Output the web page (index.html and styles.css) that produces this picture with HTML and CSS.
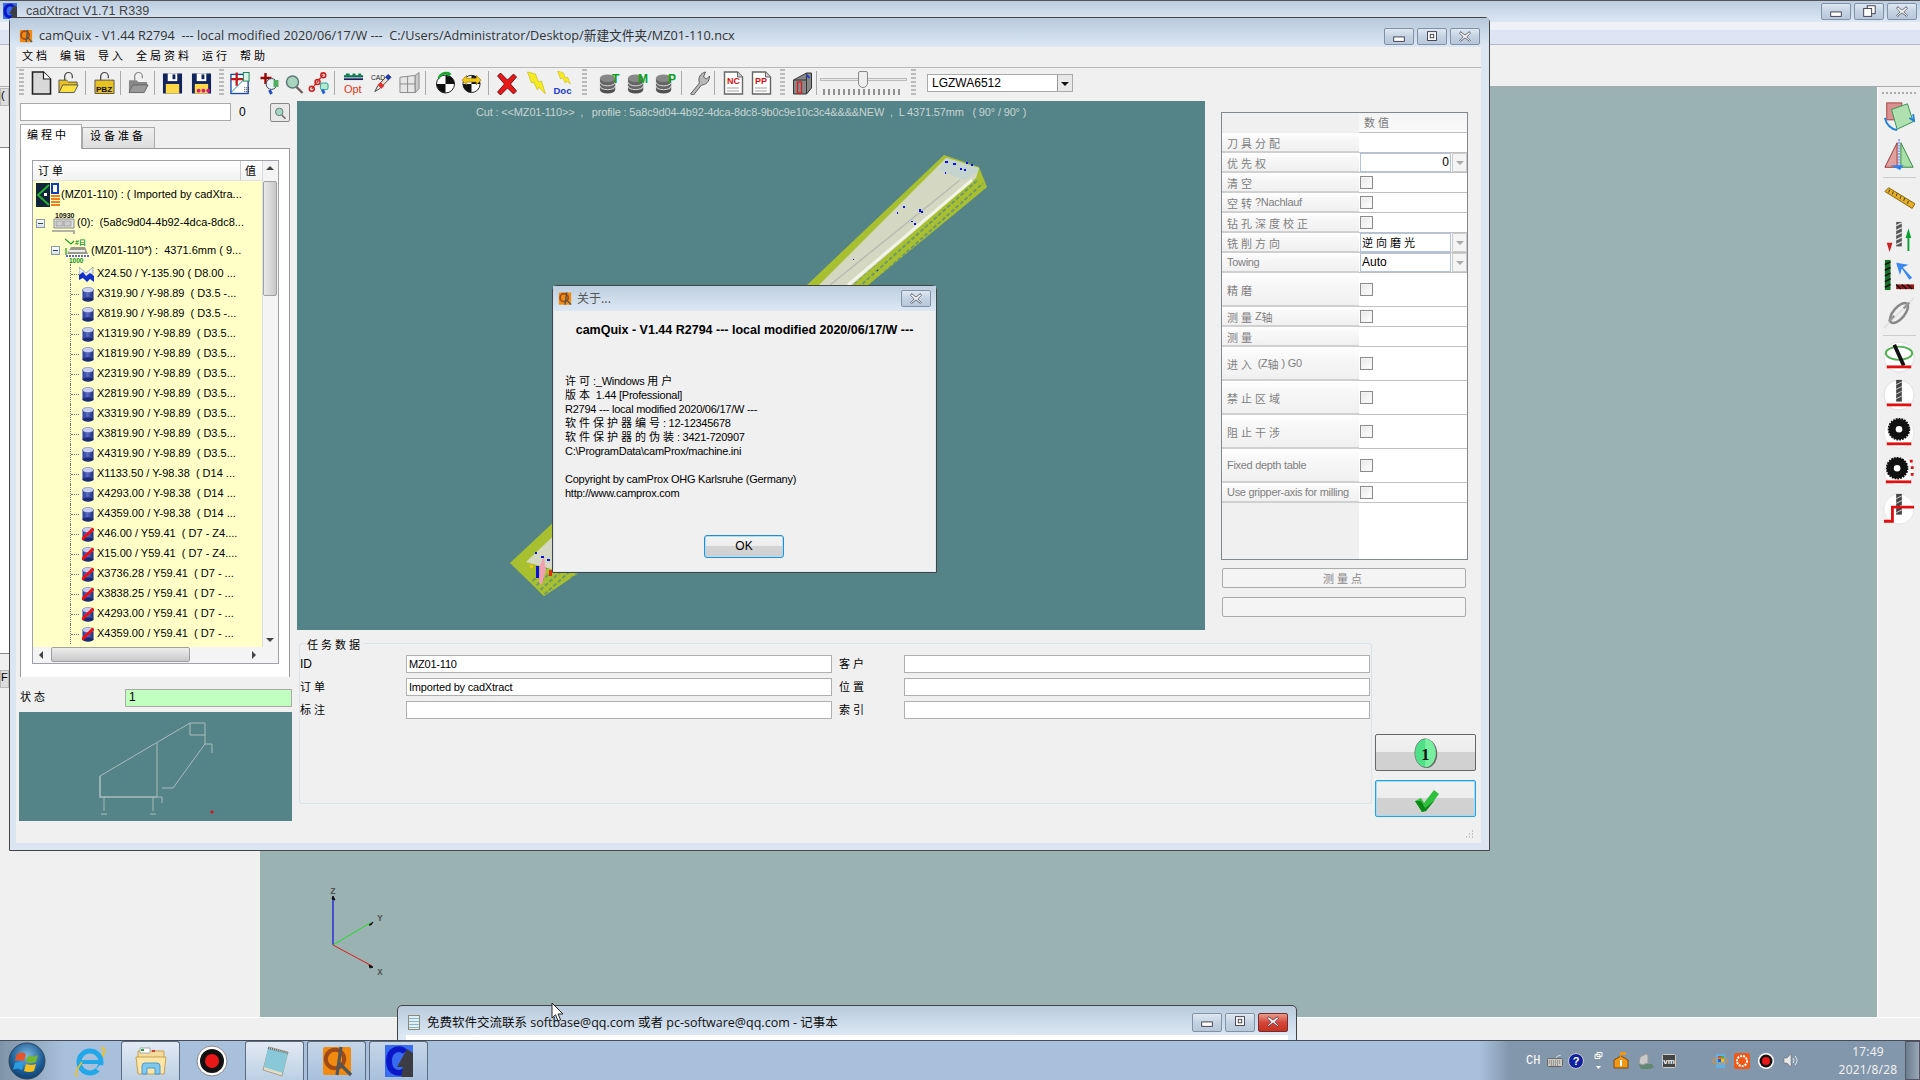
FILE: index.html
```html
<!DOCTYPE html>
<html lang="zh">
<head>
<meta charset="utf-8">
<title>camQuix</title>
<link rel="stylesheet" href="styles.css">
</head>
<body>
<svg class="defs" width="0" height="0">
  <defs>
    <linearGradient id="cyl" x1="0" x2="1" y1="0" y2="0"><stop offset="0" stop-color="#28389a"/><stop offset=".45" stop-color="#5a6cc8"/><stop offset="1" stop-color="#1c2a78"/></linearGradient>
    <symbol id="i-qlogo" viewBox="0 0 16 16"><rect x="1" y="1" width="14" height="14" rx="1" fill="#f08a10"/><circle cx="7" cy="7" r="4.6" fill="none" stroke="#a04a18" stroke-width="2"/><path d="M9 9l6 6M10 1l-2 14" stroke="#555" stroke-width="1.6"/></symbol>
    <symbol id="i-clogo" viewBox="0 0 16 16"><rect x="1" y="0" width="14" height="16" fill="#3a6cf0"/><path d="M11 3.5C9 1 3 1.5 3 8s6 7 8 4.5" fill="none" stroke="#0a18c8" stroke-width="3"/><path d="M12 2l-5 9 3 0-1 5h6V4z" fill="#3c3c44"/></symbol>
    <symbol id="i-cyl" viewBox="0 0 12 15"><rect x=".5" y="2.5" width="11" height="10.5" fill="url(#cyl)"/><ellipse cx="6" cy="12.5" rx="5.5" ry="2.2" fill="#1c2a78"/><ellipse cx="6" cy="3" rx="5.5" ry="2.6" fill="#c8d0f0" stroke="#5060b0" stroke-width=".5"/></symbol>
    <symbol id="i-cylx" viewBox="0 0 12 15"><use href="#i-cyl" width="12" height="15"/><path d="M0 12.5L11.5 1.5" stroke="#f01010" stroke-width="3"/></symbol>
    <symbol id="i-mill" viewBox="0 0 15 15"><path d="M0 0l7 6 7-6v7l-7 6-7-6z" fill="#e8ecf4" stroke="#667" stroke-width=".5"/><path d="M0 8l4-3 3 4 4-3 4 3v6l-4-3-3 3-4-4-4 2z" fill="#1030c8"/></symbol>
    <symbol id="i-order" viewBox="0 0 24 24"><rect x="0" y="0" width="14" height="24" fill="#12243a"/><path d="M13 2L2 12l11 10" fill="none" stroke="#28b030" stroke-width="2"/><rect x="8" y="10" width="3" height="3" fill="#fff"/><rect x="15" y="0" width="8" height="11" fill="#1040c0"/><rect x="17" y="2" width="4" height="7" fill="#fff"/><path d="M15 13h9M15 16h9M15 19h9M15 22h9" stroke="#f08020" stroke-width="2"/></symbol>
    <symbol id="i-sheet" viewBox="0 0 24 24"><path d="M3 8h20v9H3z" fill="#e4e4e4" stroke="#8a8a8a"/><rect x="5" y="10" width="7" height="5" fill="#ccc" stroke="#888" stroke-width=".6"/><rect x="13" y="10" width="7" height="5" fill="#ccc" stroke="#888" stroke-width=".6"/><path d="M1 20h22v3" fill="none" stroke="#999" stroke-width="1.6"/><text x="4" y="7" class="svg-t" font-size="7" font-weight="700" fill="#111">10930</text></symbol>
    <symbol id="i-part" viewBox="0 0 24 26"><path d="M2 16l4-7h14l3 7z" fill="#9a9a8a"/><path d="M4 13h16" stroke="#eee" stroke-width="2"/><path d="M1 18h23" stroke="#3030e0" stroke-dasharray="2 1" stroke-width="1.4"/><path d="M1 10V17M0 1l6 5 3-3" fill="none" stroke="#18a018" stroke-width="1.2"/><text x="10" y="7" class="svg-t" font-size="7" font-weight="700" fill="#089018">#日</text><text x="4" y="25" class="svg-t" font-size="6.500" font-weight="700" fill="#089018">1000</text></symbol>
    <symbol id="t-new" viewBox="0 0 20 24"><path d="M1 1h11l7 7v15H1z" fill="#d8d8d8" stroke="#222" stroke-width="1.6"/><path d="M12 1v7h7" fill="#fff" stroke="#222" stroke-width="1.2"/></symbol>
    <symbol id="t-open" viewBox="0 0 22 24"><path d="M7 9V5a4 4 0 0 1 8 0v2" fill="none" stroke="#444" stroke-width="1.3"/><path d="M1 22V9h8l2 2h9v4H5z" fill="#e8c020" stroke="#555"/><path d="M1 22l4-8h16l-4 8z" fill="#fde040" stroke="#555"/></symbol>
    <symbol id="t-pbz" viewBox="0 0 22 24"><path d="M7 9V5a4 4 0 0 1 8 0v2" fill="none" stroke="#444" stroke-width="1.3"/><path d="M1 23V9h20v14z" fill="#e8c020" stroke="#555"/><text x="2" y="21" class="svg-t" font-size="8.500" font-weight="700" fill="#111">PBZ</text></symbol>
    <symbol id="t-ogray" viewBox="0 0 22 24"><path d="M7 9V5a4 4 0 0 1 8 0v2" fill="none" stroke="#888" stroke-width="1.3"/><path d="M1 22V9h8l2 2h9v4H5z" fill="#888"/><path d="M1 22l4-8h16l-4 8z" fill="#999" stroke="#666"/></symbol>
    <symbol id="t-save" viewBox="0 0 22 24"><path d="M1 2h20v21H1z" fill="#12245c"/><rect x="6" y="2" width="10" height="8" fill="#fff"/><rect x="11" y="3" width="3" height="5" fill="#12245c"/><rect x="4" y="13" width="14" height="10" fill="#ffd848"/></symbol>
    <symbol id="t-save2" viewBox="0 0 22 24"><path d="M1 2h20v21H1z" fill="#12245c"/><rect x="6" y="2" width="10" height="8" fill="#fff"/><rect x="11" y="3" width="3" height="5" fill="#12245c"/><rect x="4" y="13" width="14" height="10" fill="#ffd848"/><circle cx="8" cy="20" r="2" fill="#d81880"/><circle cx="13" cy="20" r="2" fill="#d81880"/><circle cx="18" cy="20" r="2" fill="#d81880"/></symbol>
    <symbol id="t-tool" viewBox="0 0 22 24"><rect x="1" y="3" width="18" height="20" fill="#fff" stroke="#1848a8" stroke-width="1.4"/><path d="M1 22L15 8" stroke="#2080c0" stroke-width="1"/><path d="M7 1v14M1 8h13" stroke="#c01818" stroke-width="2.4"/><rect x="14" y="1" width="6" height="9" fill="#d8f0e8" stroke="#168050"/><path d="M15 17h5M15 19h5M15 21h5" stroke="#222" stroke-dasharray="1 1"/></symbol>
    <symbol id="t-plus" viewBox="0 0 20 24"><path d="M5 2v11M0 7h11" stroke="#980808" stroke-width="2.4"/><circle cx="11" cy="13" r="5.4" fill="#e8f4f4" stroke="#445"/><path d="M9 19l2 4" stroke="#2050c8" stroke-width="3"/><rect x="13" y="9" width="5" height="7" fill="#50b060"/></symbol>
    <symbol id="t-mag" viewBox="0 0 18 24"><circle cx="7" cy="11" r="6" fill="#a8d4c0" stroke="#607878" stroke-width="1.5"/><path d="M11 16l6 6" stroke="#706060" stroke-width="2.4"/></symbol>
    <symbol id="t-nodes" viewBox="0 0 22 24"><path d="M4 18L16 3" stroke="#d02020" stroke-width="1.4" stroke-dasharray="3 1"/><circle cx="4" cy="18" r="2.6" fill="none" stroke="#d02020" stroke-width="1.6"/><circle cx="10" cy="11" r="2.6" fill="none" stroke="#d02020" stroke-width="1.6"/><circle cx="16" cy="4" r="2.6" fill="none" stroke="#d02020" stroke-width="1.6"/><rect x="13" y="12" width="8" height="7" rx="2" fill="#b8e8d0" stroke="#18a090"/><path d="M15 19l2 4" stroke="#2060d0" stroke-width="3"/></symbol>
    <symbol id="t-opt" viewBox="0 0 22 24"><path d="M1 5h20" stroke="#107060" stroke-width="2.4"/><path d="M3 2h4v3H3zM10 2h3v3h-3zM16 2h3v3h-3z" fill="#108050"/><path d="M1 8h20" stroke="#1a1a60" stroke-width="1.8"/><text x="1" y="22" class="svg-t" font-size="11.500" fill="#e03818">Opt</text></symbol>
    <symbol id="t-cad" viewBox="0 0 22 24"><text x="0" y="9" class="svg-t" font-size="7" fill="#222">CAD</text><path d="M4 21l3-6L18 3l3 3L9 18z" fill="#e8e0d0" stroke="#444"/><path d="M15 6l3 3 3-3-3-3z" fill="#1838b8"/><path d="M7 14l4 4 3-3-4-4z" fill="#e03030"/></symbol>
    <symbol id="t-grid" viewBox="0 0 22 24"><path d="M1 6l16-2v18H1z" fill="#e6e6e6" stroke="#888"/><path d="M17 4l4-3v17l-4 4z" fill="#ccc" stroke="#888"/><path d="M9 5v17M1 13h16" stroke="#888"/></symbol>
    <symbol id="t-target" viewBox="0 0 20 24"><circle cx="10" cy="13" r="9" fill="#fff" stroke="#222"/><path d="M10 4a9 9 0 0 1 9 9H10zM10 13v9a9 9 0 0 1-9-9z" fill="#111"/><path d="M2 7a9 9 0 0 1 11-6l-1-1 4 3-4 3V4a6 6 0 0 0-8 4z" fill="#18a830"/></symbol>
    <symbol id="t-target2" viewBox="0 0 22 24"><circle cx="11" cy="13" r="9" fill="#fff" stroke="#222"/><path d="M11 4a9 9 0 0 1 9 9h-9zM11 13v9a9 9 0 0 1-9-9z" fill="#111"/><path d="M1 9l5-5v3h10V4l5 5-5 5v-3H6v3z" fill="#f0c818" stroke="#806000" stroke-width=".6"/></symbol>
    <symbol id="t-x" viewBox="0 0 20 24"><path d="M3 2l7 7 6-6 3 3-6 7 6 7-3 3-6-6-7 7-3-3 7-8L0 5z" fill="#e81818" stroke="#500" stroke-width=".8"/></symbol>
    <symbol id="t-bolt" viewBox="0 0 20 24"><path d="M1 1l8 2 3 8 3-1 4 13-7-7-1 3-4-8-2 1z" fill="#f4ec20" stroke="#c0b010" stroke-width=".6"/></symbol>
    <symbol id="t-doc" viewBox="0 0 20 24"><path d="M4 0l6 2 2 5 2-1 3 7-4-3-1 2-3-5-2 1z" fill="#f4ec20" stroke="#c0b010" stroke-width=".5"/><text x="0" y="23" class="svg-t" font-size="9.500" font-weight="700" fill="#1838d8">Doc</text></symbol>
    <symbol id="t-db" viewBox="0 0 22 24"><ellipse cx="9" cy="19" rx="8" ry="4" fill="#505050"/><rect x="1" y="7" width="16" height="12" fill="#666"/><path d="M1 11a8 4 0 0 0 16 0M1 15a8 4 0 0 0 16 0" fill="none" stroke="#ddd"/><ellipse cx="9" cy="7" rx="8" ry="4" fill="#888"/></symbol>
    <symbol id="t-wrench" viewBox="0 0 20 24"><path d="M1 23l9-11c-2-5 1-10 6-11l-2 5 3 2 3-3c0 6-4 9-8 9l-8 10z" fill="#b8b8b8" stroke="#555" stroke-width=".9"/></symbol>
    <symbol id="t-page" viewBox="0 0 20 24"><path d="M1 1h13l5 5v17H1z" fill="#fff" stroke="#666" stroke-width="1.4"/><path d="M14 1v5h5" fill="#ccc" stroke="#666"/><path d="M4 17h12M4 20h12" stroke="#444" stroke-dasharray="1 1" stroke-width="1.2"/></symbol>
    <symbol id="t-box" viewBox="0 0 20 24"><path d="M1 9l13-7h5v15l-5 6H1z" fill="#888" stroke="#333"/><path d="M14 2v21M1 9h13" stroke="#333"/><rect x="5" y="11" width="4" height="11" fill="none" stroke="#e01818" stroke-width="1.2"/><path d="M14 4l3 3" stroke="#2840d0" stroke-width="2"/></symbol>
    <symbol id="tick-x" viewBox="0 0 86 6"><path d="M4 0v6M9 0v6M14 0v6M19 0v6M24 0v6M29 0v6M34 0v6M39 0v6M44 0v6M49 0v6M54 0v6M59 0v6M64 0v6M69 0v6M74 0v6M79 0v6" stroke="#333"/></symbol>
    <symbol id="r-rot" viewBox="0 0 34 34"><rect x="4" y="2" width="16" height="18" fill="#dc9090" stroke="#a04040"/><path d="M9 9l17-6 6 19-17 8z" fill="#b0e0b0" stroke="#309050"/><path d="M2 18a16 16 0 0 0 13 13M32 14l1 7-5-3" fill="none" stroke="#2080e0" stroke-width="2"/></symbol>
    <symbol id="r-mirror" viewBox="0 0 34 34"><path d="M15 4L2 30h13z" fill="#e0a0a0" stroke="#903030"/><path d="M19 4l13 26H19z" fill="#a8e0a8" stroke="#308040"/><path d="M17 0v30" stroke="#2060e0" stroke-dasharray="2 1"/><path d="M8 28h14l-4 5z" fill="#3080f0"/></symbol>
    <symbol id="r-ruler" viewBox="0 0 34 34"><path d="M2 9l4-4 28 17-3 5z" fill="#e8b020" stroke="#806010"/><path d="M7 7l-1 3M11 9l-1 3M15 11l-1 3M19 14l-1 3M23 16l-1 3M27 19l-1 3" stroke="#333"/></symbol>
    <symbol id="r-updown" viewBox="0 0 34 34"><rect x="14" y="1" width="6" height="26" fill="#555"/><path d="M14 5l6-3M14 10l6-3M14 15l6-3M14 20l6-3M14 25l6-3" stroke="#ddd" stroke-width="1.5"/><path d="M7 9v14h-3l3 10 3-10H7z" fill="#c82020"/><path d="M27 8L24 18h2v14h2V18h2z" fill="#08a030"/></symbol>
    <symbol id="r-tool" viewBox="0 0 34 34"><rect x="2" y="1" width="6" height="32" fill="#187028"/><path d="M2 6l6-3M2 12l6-3M2 18l6-3M2 24l6-3M2 30l6-3" stroke="#111" stroke-width="1.6"/><path d="M14 27h19v5H14z" fill="#901818"/><path d="M14 27l5 5M20 27l5 5M26 27l5 5" stroke="#111" stroke-width="1.4"/><path d="M28 22L20 10l-2 7-4-13 13 2-6 3 10 11z" fill="#3888f0"/></symbol>
    <symbol id="r-chain" viewBox="0 0 34 34"><path d="M1 33L33 1" stroke="#ddd" stroke-width="1.5"/><ellipse cx="17" cy="17" rx="6" ry="13" transform="rotate(40 17 17)" fill="none" stroke="#888" stroke-width="2.6"/><path d="M6 26l6-6M22 12l6-6" stroke="#999" stroke-width="2.6"/></symbol>
    <symbol id="r-orbit" viewBox="0 0 34 34"><circle cx="17" cy="17" r="16" fill="#fff" stroke="#ddd"/><ellipse cx="17" cy="13" rx="14" ry="7" fill="none" stroke="#50b050" stroke-width="2"/><path d="M12 4l10 22" stroke="#111" stroke-width="4"/><rect x="4" y="26" width="26" height="3" fill="#e01010"/></symbol>
    <symbol id="r-drill" viewBox="0 0 34 34"><circle cx="17" cy="17" r="16" fill="#fff" stroke="#ddd"/><rect x="14" y="1" width="6" height="23" fill="#444"/><path d="M14 6l6-3M14 11l6-3M14 16l6-3M14 21l6-3" stroke="#ddd"/><rect x="4" y="26" width="26" height="3" fill="#e01010"/></symbol>
    <symbol id="r-saw" viewBox="0 0 34 34"><circle cx="17" cy="17" r="16" fill="#fff" stroke="#e4e4e4"/><circle cx="17" cy="13" r="11" fill="#111" stroke="#111" stroke-width="2" stroke-dasharray="2 1"/><circle cx="17" cy="13" r="3.5" fill="#fff"/><rect x="4" y="27" width="26" height="3" fill="#e01010"/></symbol>
    <symbol id="r-saw2" viewBox="0 0 34 34"><circle cx="17" cy="17" r="16" fill="#fff" stroke="#e4e4e4"/><circle cx="15" cy="14" r="11" fill="#111" stroke="#111" stroke-width="2" stroke-dasharray="2 1"/><circle cx="15" cy="14" r="3.5" fill="#fff"/><rect x="3" y="27" width="27" height="3" fill="#e01010"/><path d="M30 5v3M31 12v3M31 19v3" stroke="#e01010" stroke-width="3"/></symbol>
    <symbol id="r-step" viewBox="0 0 34 34"><circle cx="17" cy="17" r="16" fill="#fff" stroke="#e4e4e4"/><rect x="14" y="1" width="6" height="22" fill="#444"/><path d="M14 6l6-3M14 11l6-3M14 16l6-3M14 21l6-3" stroke="#ddd"/><path d="M1 30h9V15h23" fill="none" stroke="#e01010" stroke-width="3"/></symbol>
    <symbol id="w-min" viewBox="0 0 30 17"><rect x="9" y="9" width="12" height="5" fill="#fff" stroke="#334"/></symbol>
    <symbol id="w-max" viewBox="0 0 30 17"><rect x="10" y="3" width="10" height="10" fill="#fff" stroke="#334"/><rect x="13" y="6" width="4" height="4" fill="none" stroke="#334"/></symbol>
    <symbol id="w-restore" viewBox="0 0 30 17"><rect x="13" y="2" width="9" height="9" fill="#fff" stroke="#334"/><rect x="9" y="5" width="9" height="9" fill="#fff" stroke="#334"/></symbol>
    <symbol id="w-close" viewBox="0 0 30 17"><path d="M10 3l5 4 5-4 1 2-4 4 4 4-1 1-5-4-5 4-1-1 4-4-4-4z" fill="#fff" stroke="#334" stroke-width=".8"/></symbol>
  </defs>
</svg>

<div class="desk">
  <div class="bgwin">
    <div class="bg-title"><svg class="bg-logo"><use href="#i-clogo"/></svg><span>cadXtract V1.71 R339</span>
      <div class="bg-ctrl"><span class="wbtn"><svg><use href="#w-min"/></svg></span><span class="wbtn"><svg><use href="#w-restore"/></svg></span><span class="wbtn"><svg><use href="#w-close"/></svg></span></div>
    </div>
    <div class="bg-band1"></div>
    <div class="bg-band2"></div>
    <div class="bg-tools"></div>
    <div class="bg-main">
      <div class="bg-left">
        <div class="bl-tab">(</div>
        <div class="bl-panel"></div>
        <div class="bl-btn">F</div>
      </div>
      <div class="bg-canvas">
        <svg class="axes" viewBox="300 860 100 120" width="100" height="120">
          <path d="M333 945V898" stroke="#1010e0" stroke-width="1.2" fill="none"/>
          <path d="M333 945L370 923" stroke="#20e020" stroke-width="1" fill="none"/>
          <path d="M333 945L372 966" stroke="#e01818" stroke-width="1" fill="none"/>
          <path d="M332 899l1-3 2 4zM369 925l4-3-2 3zM369 965l4 2-3 1z" fill="#111" stroke="#111"/>
          <text x="333" y="894" class="axis-t">Z</text>
          <text x="380" y="921" class="axis-t">Y</text>
          <text x="380" y="975" class="axis-t">X</text>
        </svg>
      </div>
      <div class="bg-right">
        <div class="r-grip"></div>
        <svg class="r-i r-first"><use href="#r-rot"/></svg>
        <svg class="r-i"><use href="#r-mirror"/></svg>
        <div class="r-sep"></div>
        <svg class="r-i"><use href="#r-ruler"/></svg>
        <svg class="r-i"><use href="#r-updown"/></svg>
        <svg class="r-i"><use href="#r-tool"/></svg>
        <svg class="r-i"><use href="#r-chain"/></svg>
        <div class="r-sep"></div>
        <svg class="r-i"><use href="#r-orbit"/></svg>
        <svg class="r-i"><use href="#r-drill"/></svg>
        <svg class="r-i"><use href="#r-saw"/></svg>
        <svg class="r-i"><use href="#r-saw2"/></svg>
        <svg class="r-i"><use href="#r-step"/></svg>
      </div>
    </div>
    <div class="bg-foot"></div>
  </div>

  <div class="notepad">
    <div class="np-title"><span class="np-ic"></span><span class="np-text">免费软件交流联系 softbase@qq.com 或者 pc-software@qq.com - 记事本</span>
      <div class="np-ctrl"><span class="wbtn"><svg><use href="#w-min"/></svg></span><span class="wbtn"><svg><use href="#w-max"/></svg></span><span class="wbtn wbtn-red"><svg><use href="#w-close"/></svg></span></div>
    </div>
    <div class="np-body"></div>
  </div>

  <div class="camq">
    <div class="cq-title"><svg class="cq-logo"><use href="#i-qlogo"/></svg><span class="cq-text">camQuix - V1.44 R2794  --- local modified 2020/06/17/W ---  C:/Users/Administrator/Desktop/新建文件夹/MZ01-110.ncx</span>
      <div class="cq-ctrl"><span class="wbtn"><svg><use href="#w-min"/></svg></span><span class="wbtn"><svg><use href="#w-max"/></svg></span><span class="wbtn"><svg><use href="#w-close"/></svg></span></div>
    </div>
    <div class="cq-client">
      <div class="menu"><span>文档</span><span>编辑</span><span>导入</span><span>全局资料</span><span>运行</span><span>帮助</span></div>
      <div class="tools">
        <i class="grip ml3"></i>
        <svg class="ti ml7"><use href="#t-new"/></svg>
        <svg class="ti ml6"><use href="#t-open"/></svg>
        <i class="sep ml6"></i>
        <svg class="ti ml8"><use href="#t-pbz"/></svg>
        <i class="sep ml5"></i>
        <svg class="ti ml7"><use href="#t-ogray"/></svg>
        <i class="sep ml5"></i>
        <svg class="ti ml7"><use href="#t-save"/></svg>
        <svg class="ti ml8"><use href="#t-save2"/></svg>
        <i class="grip ml7"></i>
        <svg class="ti ml6"><use href="#t-tool"/></svg>
        <svg class="ti ml9"><use href="#t-plus"/></svg>
        <svg class="ti ml3"><use href="#t-mag"/></svg>
        <svg class="ti ml3"><use href="#t-nodes"/></svg>
        <i class="sep ml5"></i>
        <svg class="ti ml8"><use href="#t-opt"/></svg>
        <svg class="ti ml7"><use href="#t-cad"/></svg>
        <svg class="ti ml7"><use href="#t-grid"/></svg>
        <i class="sep ml5"></i>
        <svg class="ti ml9"><use href="#t-target"/></svg>
        <svg class="ti ml5"><use href="#t-target2"/></svg>
        <i class="sep ml6"></i>
        <svg class="ti ml8"><use href="#t-x"/></svg>
        <svg class="ti ml8"><use href="#t-bolt"/></svg>
        <svg class="ti ml6"><use href="#t-doc"/></svg>
        <i class="grip ml8"></i>
        <svg class="ti ml12 db"><use href="#t-db"/><text x="13" y="12" class="svg-t db-t">T</text></svg>
        <svg class="ti ml7 db"><use href="#t-db"/><text x="11" y="12" class="svg-t db-t">M</text></svg>
        <svg class="ti ml7 db"><use href="#t-db"/><text x="13" y="12" class="svg-t db-t">P</text></svg>
        <i class="sep ml5"></i>
        <svg class="ti ml7"><use href="#t-wrench"/></svg>
        <i class="sep ml4"></i>
        <svg class="ti ml8 pg"><use href="#t-page"/><text x="4" y="13" class="svg-t pg-t">NC</text></svg>
        <svg class="ti ml7 pg"><use href="#t-page"/><text x="4" y="13" class="svg-t pg-t">PP</text></svg>
        <i class="grip ml8"></i>
        <svg class="ti ml7"><use href="#t-box"/></svg>
        <i class="sep ml3"></i>
        <div class="slider"><div class="sl-track"></div><svg class="sl-ticks"><use href="#tick-x"/></svg><div class="sl-thumb"></div></div>
        <i class="grip ml4"></i>
        <div class="combo-top"><span>LGZWA6512</span><b class="combo-btn"></b></div>
      </div>
      <div class="work">
        <div class="left">
          <div class="search"><div class="search-in"></div><span class="search-n">0</span><div class="search-btn"><svg viewBox="0 0 18 24" width="15" height="15"><use href="#t-mag"/></svg></div></div>
          <div class="tabs"><div class="tab tab-on">编程中</div><div class="tab">设备准备</div></div>
          <div class="tabpanel">
            <div class="treebox">
              <div class="tree">
                <div class="tree-head"><span class="th1">订单</span><span class="th2">值</span></div>
                <div class="row r28"><svg class="ic-order"><use href="#i-order"/></svg><span>(MZ01-110) : ( Imported by cadXtra...</span></div>
                <div class="row r28 lv1"><i class="minus"></i><svg class="ic-sheet"><use href="#i-sheet"/></svg><span>(0):  (5a8c9d04-4b92-4dca-8dc8...</span></div>
                <div class="row r27 lv2"><i class="minus"></i><svg class="ic-part"><use href="#i-part"/></svg><span>(MZ01-110*) :  4371.6mm ( 9...</span></div>
                <div class="leaf"><svg class="ic-cyl ic-mill"><use href="#i-mill"/></svg><span>X24.50 / Y-135.90 ( D8.00 ...</span></div>
                <div class="leaf"><svg class="ic-cyl"><use href="#i-cyl"/></svg><span>X319.90 / Y-98.89  ( D3.5 -...</span></div>
                <div class="leaf"><svg class="ic-cyl"><use href="#i-cyl"/></svg><span>X819.90 / Y-98.89  ( D3.5 -...</span></div>
                <div class="leaf"><svg class="ic-cyl"><use href="#i-cyl"/></svg><span>X1319.90 / Y-98.89  ( D3.5...</span></div>
                <div class="leaf"><svg class="ic-cyl"><use href="#i-cyl"/></svg><span>X1819.90 / Y-98.89  ( D3.5...</span></div>
                <div class="leaf"><svg class="ic-cyl"><use href="#i-cyl"/></svg><span>X2319.90 / Y-98.89  ( D3.5...</span></div>
                <div class="leaf"><svg class="ic-cyl"><use href="#i-cyl"/></svg><span>X2819.90 / Y-98.89  ( D3.5...</span></div>
                <div class="leaf"><svg class="ic-cyl"><use href="#i-cyl"/></svg><span>X3319.90 / Y-98.89  ( D3.5...</span></div>
                <div class="leaf"><svg class="ic-cyl"><use href="#i-cyl"/></svg><span>X3819.90 / Y-98.89  ( D3.5...</span></div>
                <div class="leaf"><svg class="ic-cyl"><use href="#i-cyl"/></svg><span>X4319.90 / Y-98.89  ( D3.5...</span></div>
                <div class="leaf"><svg class="ic-cyl"><use href="#i-cyl"/></svg><span>X1133.50 / Y-98.38  ( D14 ...</span></div>
                <div class="leaf"><svg class="ic-cyl"><use href="#i-cyl"/></svg><span>X4293.00 / Y-98.38  ( D14 ...</span></div>
                <div class="leaf"><svg class="ic-cyl"><use href="#i-cyl"/></svg><span>X4359.00 / Y-98.38  ( D14 ...</span></div>
                <div class="leaf"><svg class="ic-cyl"><use href="#i-cylx"/></svg><span>X46.00 / Y59.41  ( D7 - Z4....</span></div>
                <div class="leaf"><svg class="ic-cyl"><use href="#i-cylx"/></svg><span>X15.00 / Y59.41  ( D7 - Z4....</span></div>
                <div class="leaf"><svg class="ic-cyl"><use href="#i-cylx"/></svg><span>X3736.28 / Y59.41  ( D7 - ...</span></div>
                <div class="leaf"><svg class="ic-cyl"><use href="#i-cylx"/></svg><span>X3838.25 / Y59.41  ( D7 - ...</span></div>
                <div class="leaf"><svg class="ic-cyl"><use href="#i-cylx"/></svg><span>X4293.00 / Y59.41  ( D7 - ...</span></div>
                <div class="leaf leaf-last"><svg class="ic-cyl"><use href="#i-cylx"/></svg><span>X4359.00 / Y59.41  ( D7 - ...</span></div>
              </div>
              <div class="vscroll"><b class="arr-up"></b><div class="vthumb"></div><b class="arr-down"></b></div>
              <div class="hscroll"><b class="arr-left"></b><div class="hthumb"></div><b class="arr-right"></b></div>
              <div class="corner"></div>
            </div>
          </div>
          <div class="status"><span class="cjk">状态</span><div class="status-in">1</div></div>
          <div class="mini">
            <svg viewBox="0 0 273 109" width="273" height="109">
              <g fill="none" stroke="#a8bcbc">
                <path d="M81 64L171 11h15v21h7v9M171 11v12h15M138 31v54M143 85v6M143 85h-5M143 76h11l32-44M85 85v14M134 85v14" stroke-width="1"/>
                <path d="M81 64v21h57" stroke-width="1.6"/>
                <path d="M82 102h6M131 102h6" stroke-width="1"/>
              </g>
              <circle cx="193" cy="100" r="1.6" fill="#e01010"/>
            </svg>
          </div>
        </div>
        <div class="right">
          <div class="top">
            <div class="view">
              <div class="view-cap">Cut : &lt;&lt;MZ01-110&gt;&gt;  ,   profile : 5a8c9d04-4b92-4dca-8dc8-9b0c9e10c3c4&amp;&amp;&amp;&amp;NEW  ,  L 4371.57mm   ( 90° / 90° )</div>
              <svg class="beam" viewBox="297 101 908 529" width="908" height="529">
                <defs>
                  <pattern id="hatch" width="6" height="6" patternUnits="userSpaceOnUse" patternTransform="rotate(-42)"><rect width="6" height="6" fill="#a8c030"/><rect x="1" y="1" width="4" height="2" fill="#6f9a68"/></pattern>
                  <linearGradient id="body" x1="0" y1="0" x2="1" y2="1"><stop offset="0" stop-color="#ccd0c0"/><stop offset="1" stop-color="#dde0c4"/></linearGradient>
                </defs>
                <polygon points="944,155 979,167 987,187 868,285 577,574 544,596 510,563 807,285" fill="#a8c030"/>
                <polygon points="976,177 987,187 868,285 577,574 544,596 530,582 835,290" fill="url(#hatch)"/>
                <polygon points="946,158 979,168 976,178 852,285 555,570 526,562 820,284" fill="url(#body)"/>
                <polygon points="977,172 979,168 947,158 938,170 965,180" fill="#c6d4d0"/>
                <path d="M972 180L848 285" stroke="#f2f4e6" stroke-width="3" fill="none"/>
                <path d="M960 180L830 285" stroke="#b8bcb0" stroke-width="1.5" fill="none"/>
                <g fill="#0a10e0">
                  <rect x="945" y="161" width="3" height="2"/><rect x="953" y="163" width="3" height="2"/><rect x="966" y="162" width="2" height="2"/><rect x="971" y="164" width="2" height="2"/><rect x="960" y="168" width="2" height="2"/><rect x="964" y="169" width="2" height="2"/><rect x="945" y="172" width="1" height="2"/><rect x="903" y="206" width="2" height="2"/><rect x="897" y="212" width="1" height="2"/><rect x="919" y="209" width="2" height="3"/><rect x="921" y="211" width="2" height="2"/><rect x="911" y="221" width="2" height="1"/><rect x="914" y="223" width="2" height="2"/><rect x="853" y="259" width="1" height="1"/><rect x="877" y="270" width="1" height="1"/>
                  <rect x="535" y="552" width="2" height="2"/><rect x="541" y="556" width="2" height="2"/><rect x="536" y="566" width="3" height="12"/><rect x="542" y="556" width="2" height="2"/><rect x="547" y="559" width="3" height="2"/>
                </g>
                <path d="M540 566q3-9 4-8l2 12-4 14q-3 1-3-4z" fill="#f0a0b0"/>
                <rect x="530" y="565" width="3" height="3" fill="#f0c810"/><rect x="549" y="570" width="3" height="6" fill="#e03010"/>
              </svg>
            </div>
            <div class="side">
              <div class="props">
                <div class="pr phead"><div class="pl"></div><div class="pv cjkg">数值</div></div>
                <div class="pr"><div class="pl"><span class="ws">刀具分配</span></div><div class="pv"></div></div>
                <div class="pr"><div class="pl"><span class="ws">优先权</span></div><div class="pv"><div class="fld fld-r">0</div><b class="fld-btn"></b></div></div>
                <div class="pr"><div class="pl"><span class="ws">清空</span></div><div class="pv"><i class="chk"></i></div></div>
                <div class="pr"><div class="pl"><span class="ws">空转</span>?Nachlauf</div><div class="pv"><i class="chk"></i></div></div>
                <div class="pr"><div class="pl"><span class="ws">钻孔深度校正</span></div><div class="pv"><i class="chk"></i></div></div>
                <div class="pr"><div class="pl"><span class="ws">铣削方向</span></div><div class="pv"><div class="fld fld-c">逆向磨光</div><b class="fld-btn"></b></div></div>
                <div class="pr"><div class="pl">Towing</div><div class="pv"><div class="fld">Auto</div><b class="fld-btn"></b></div></div>
                <div class="pr tall"><div class="pl"><span class="ws">精磨</span></div><div class="pv"><i class="chk"></i></div></div>
                <div class="pr"><div class="pl"><span class="ws">测量</span>Z<span class="ws">轴</span></div><div class="pv"><i class="chk"></i></div></div>
                <div class="pr"><div class="pl"><span class="ws">测量</span></div><div class="pv"></div></div>
                <div class="pr tall"><div class="pl"><span class="ws">进入</span> (Z<span class="ws">轴</span>) G0</div><div class="pv"><i class="chk"></i></div></div>
                <div class="pr tall"><div class="pl"><span class="ws">禁止区域</span></div><div class="pv"><i class="chk"></i></div></div>
                <div class="pr tall"><div class="pl"><span class="ws">阻止干涉</span></div><div class="pv"><i class="chk"></i></div></div>
                <div class="pr tall"><div class="pl">Fixed depth table</div><div class="pv"><i class="chk"></i></div></div>
                <div class="pr"><div class="pl">Use gripper-axis for milling</div><div class="pv"><i class="chk"></i></div></div>
                <div class="pfill"><div class="pfl"></div><div class="pfr"></div></div>
              </div>
              <div class="dbtn first">测量点</div>
              <div class="dbtn"></div>
            </div>
          </div>
          <div class="bottom">
            <div class="group">
              <div class="legend">任务数据</div>
              <div class="form">
                <label>ID</label><div class="in">MZ01-110</div><label class="cjk">客户</label><div class="in"></div>
                <label class="cjk">订单</label><div class="in">Imported by cadXtract</div><label class="cjk">位置</label><div class="in"></div>
                <label class="cjk">标注</label><div class="in"></div><label class="cjk">索引</label><div class="in"></div>
              </div>
            </div>
            <div class="actions">
              <div class="abtn"><svg viewBox="0 0 32 40" width="32" height="30"><ellipse cx="17" cy="21" rx="14" ry="19" fill="#666"/><ellipse cx="15" cy="20" rx="14" ry="19" fill="#50e088" stroke="#777"/><path d="M15 1a14 19 0 0 1 0 38z" fill="#78f0a0"/><text x="15" y="29" class="svg-one">1</text></svg></div>
              <div class="abtn abtn-on"><svg viewBox="0 0 28 26" width="28" height="26"><path d="M3 14l6-3 3 5L22 3l5 4-13 17-4 1z" fill="#30c040"/><path d="M3 14l7 11 4-1 9-11-10 8-4-7z" fill="#0c8a18"/></svg></div>
            </div>
          </div>
          <svg class="sizegrip" width="10" height="10" viewBox="0 0 10 10"><path d="M8 1h1M5 4h1M8 4h1M2 7h1M5 7h1M8 7h1" stroke="#999"/></svg>
        </div>
      </div>
    </div>
  </div>

  <div class="about">
    <div class="ab-title"><svg class="ab-logo"><use href="#i-qlogo"/></svg><span>关于...</span><span class="wbtn ab-close"><svg><use href="#w-close"/></svg></span></div>
    <div class="ab-body">
      <div class="ab-head">camQuix - V1.44 R2794 --- local modified 2020/06/17/W ---</div>
      <div class="ab-text">
        <div><span class="ws">许可</span>:_Windows <span class="ws">用户</span></div>
        <div><span class="ws">版本</span> 1.44 [Professional]</div>
        <div>R2794 --- local modified 2020/06/17/W ---</div>
        <div><span class="ws">软件保护器编号</span>: 12-12345678</div>
        <div><span class="ws">软件保护器的伪装</span>: 3421-720907</div>
        <div>C:\ProgramData\camProx/machine.ini</div>
        <div class="blank"></div>
        <div>Copyright by camProx OHG Karlsruhe (Germany)</div>
        <div>http://www.camprox.com</div>
      </div>
      <div class="ab-ok">OK</div>
    </div>
  </div>

  <svg class="cursor" width="13" height="20" viewBox="0 0 13 20"><path d="M1 1v15l3.5-3.2 2.5 6 2.6-1-2.6-5.8H12z" fill="#fff" stroke="#222"/></svg>

  <div class="taskbar">
    <div class="orb"><svg width="38" height="38" viewBox="0 0 38 38"><defs><radialGradient id="orbg" cx=".5" cy=".35" r=".75"><stop offset="0" stop-color="#7fb8e0"/><stop offset=".6" stop-color="#1c5c94"/><stop offset="1" stop-color="#08345c"/></radialGradient></defs><circle cx="19" cy="19" r="18" fill="url(#orbg)" stroke="#33475c"/><path d="M9 12q4-3 9 0l-2 7q-5-2-9 0z" fill="#e8542a"/><path d="M20 13q5 3 10 0l-2 7q-5 2-10 0z" fill="#74b82c"/><path d="M7 21q4-2 9 0l-2 7q-5-3-9 0z" fill="#2a9ce0"/><path d="M18 22q5 2 10 0l-2 7q-5 2-10 0z" fill="#f4c020"/></svg></div>
    <div class="tb-free ie"><svg width="36" height="36" viewBox="0 0 36 36"><path d="M29 5q6-1 1 9" fill="none" stroke="#f0c020" stroke-width="2"/><circle cx="18" cy="19" r="11" fill="none" stroke="#22a8e8" stroke-width="5"/><path d="M9 19h18" stroke="#22a8e8" stroke-width="4"/><path d="M28 22l5 1-4 6-5-3z" fill="#a8c0dc"/><path d="M6 33q-6 0 4-14" fill="none" stroke="#f0c020" stroke-width="1.5"/></svg></div>
    <div class="tb-btn b-ex"><svg width="34" height="32" viewBox="0 0 34 32"><path d="M4 6h26v22H4z" fill="#f4dc98" stroke="#c8a050"/><path d="M6 3h10v5H6z" fill="#fff" stroke="#aaa"/><rect x="7" y="4" width="3" height="2" fill="#20a040"/><rect x="18" y="5" width="3" height="2" fill="#d04030"/><path d="M2 12h30l-2 17H4z" fill="#fbe6a8" stroke="#c8a050"/><path d="M8 29V21q0-3 3-3h12q3 0 3 3v8h-5v-6h-8v6z" fill="#80c8f0" stroke="#4898c8"/></svg></div>
    <div class="tb-free rec"><svg width="32" height="32" viewBox="0 0 32 32"><circle cx="16" cy="16" r="15" fill="#fff" stroke="#888"/><circle cx="16" cy="16" r="12" fill="#111"/><circle cx="16" cy="16" r="7" fill="#e81818"/></svg></div>
    <div class="tb-btn b-np"><svg width="34" height="32" viewBox="0 0 34 32"><path d="M11 2l19 5-6 24-19-6z" fill="#e0dccc" stroke="#a8a088"/><path d="M10 3l20 5-5 20-19-6z" fill="#88c8d8"/><path d="M10 3l20 5" stroke="#666" stroke-width="2" stroke-dasharray="1 1"/></svg></div>
    <div class="tb-btn b-q"><svg width="32" height="32"><use href="#i-qlogo"/></svg></div>
    <div class="tb-btn b-c"><svg width="32" height="32"><use href="#i-clogo"/></svg></div>
    <div class="tray">
      <span class="ch">CH</span>
      <svg class="tr-kb" width="16" height="12" viewBox="0 0 16 12"><path d="M9 3q0-2 5-3" fill="none" stroke="#ddd"/><rect x=".5" y="3.5" width="15" height="8" rx="1" fill="#c8c8c0" stroke="#666"/><path d="M2 6h12M2 8h12M4 10h8" stroke="#666" stroke-dasharray="1 1"/></svg>
      <svg class="tr-help" width="16" height="16" viewBox="0 0 16 16"><circle cx="8" cy="8" r="7.5" fill="#1020a0" stroke="#ccc"/><text x="8" y="12" class="svg-help">?</text></svg>
      <span class="tr-mon"><svg width="9" height="18" viewBox="0 0 9 18"><path d="M3 .5h5v4H3zM1 2.5h5v4H1z" fill="#8296ac" stroke="#fff"/><path d="M2 14h5l-2.500 3z" fill="#fff"/></svg></span>
      <svg class="tr-2" width="17" height="17" viewBox="0 0 17 17"><path d="M1 16V8l7-4 7 4v8z" fill="#f09818" stroke="#804808"/><path d="M7 0h1v8H7zM8 0h5v3H8z" fill="#f09818"/><rect x="7" y="8" width="2" height="6" fill="#fff"/></svg>
      <svg class="tr-3" width="17" height="16" viewBox="0 0 17 16"><path d="M2 11h13l2 3-4 2H4z" fill="#608870"/><path d="M3 4l6-3 2 1v8l-6 2-3-2z" fill="#c8c8c8" stroke="#999"/></svg>
      <svg class="tr-4" width="14" height="14" viewBox="0 0 14 14"><rect x=".5" y=".5" width="13" height="13" rx="1" fill="#444" stroke="#ccc"/><text x="7" y="10" class="svg-vm">vm</text></svg>
      <svg class="tr-5" width="16" height="16" viewBox="0 0 16 16"><path d="M4 1h9v14H4z" fill="#60b0e8"/><path d="M6 3h3v3H6z" fill="#e04020"/><path d="M9 3h3v3H9z" fill="#40b040"/><path d="M6 6h3v3H6z" fill="#2060e0"/><path d="M9 6h3v3H9z" fill="#f0c020"/><ellipse cx="8" cy="8" rx="7.500" ry="3" fill="none" stroke="#f09020"/></svg>
      <svg class="tr-6" width="16" height="16" viewBox="0 0 16 16"><rect width="16" height="16" rx="2" fill="#f05818"/><circle cx="8" cy="8" r="5" fill="none" stroke="#fff" stroke-width="2" stroke-dasharray="2 1"/></svg>
      <svg class="tr-7" width="16" height="16" viewBox="0 0 16 16"><circle cx="8" cy="8" r="8" fill="#fff"/><circle cx="8" cy="8" r="6.500" fill="#111"/><circle cx="8" cy="8" r="4" fill="#e81818"/></svg>
      <svg class="tr-8" width="15" height="15" viewBox="0 0 15 15"><path d="M1 5h3l4-4v13l-4-4H1z" fill="#e8e8e8" stroke="#666" stroke-width=".5"/><path d="M10 5q2 2.500 0 5M12 3q4 4.500 0 9" fill="none" stroke="#e8e8e8"/></svg>
      <div class="clock"><div>17:49</div><div>2021/8/28</div></div>
      <div class="showdesk"></div>
    </div>
  </div>
</div>
</body>
</html>
```

FILE: styles.css
```css
* { box-sizing: border-box; }
html, body { margin: 0; padding: 0; }
body { width: 1920px; height: 1080px; overflow: hidden; background: #9ab2b2; font: 12px/1.2 "Liberation Sans", "Noto Sans CJK SC", sans-serif; color: #000; }
.defs { position: absolute; }
svg { display: block; flex: none; overflow: hidden; }
.svg-t { font-family: "Liberation Sans", sans-serif; }
.desk { position: relative; width: 1920px; height: 1080px; display: flex; flex-direction: column; overflow: hidden; }

/* toolbar item spacers */
.ml3 { margin-left: 3px; } .ml4 { margin-left: 4px; } .ml5 { margin-left: 5px; }
.ml6 { margin-left: 6px; } .ml7 { margin-left: 7px; } .ml8 { margin-left: 8px; } .ml9 { margin-left: 9px; } .ml12 { margin-left: 12px; }

/* caption buttons */
.wbtn { display: block; width: 30px; height: 17px; border: 1px solid #8091a8; border-radius: 2px; background: linear-gradient(#dfe8f2, #c4d2e2 50%, #b8c8da); }
.wbtn svg { width: 28px; height: 15px; }
.wbtn-red { background: linear-gradient(#ec9a88, #d4463a 50%, #c8301f); border-color: #6c3030; }

/* background window */
.bgwin { flex: 1; display: flex; flex-direction: column; min-height: 0; }
.bg-title { height: 22px; flex: none; display: flex; align-items: center; padding-left: 26px; position: relative; background: linear-gradient(#bccde0, #dce7f3); border-top: 1px solid #555; font-size: 12.6px; color: #444; }
.bg-logo { position: absolute; left: 2px; top: 1px; width: 16px; height: 18px; }
.bg-ctrl { position: absolute; right: 3px; top: 2px; display: flex; gap: 3px; }
.bg-band1 { height: 8px; flex: none; background: #eef2f8; }
.bg-band2 { height: 15px; flex: none; background: #dde5f4; border-bottom: 1px solid #b0b8c8; }
.bg-tools { height: 42px; flex: none; background: #f0f0f0; border-bottom: 1px solid #aaa; }
.bg-main { flex: 1; display: flex; min-height: 0; }
.bg-left { width: 260px; flex: none; background: #f0f0f0; }
.bl-tab { width: 9px; height: 18px; margin-top: 1px; background: #ddd; border: 1px solid #bbb; font-size: 11px; overflow: hidden; }
.bl-panel { width: 9px; height: 507px; margin-top: 41px; background: #fff; border-bottom: 1px solid #888; border-top: 1px solid #888; }
.bl-btn { width: 9px; height: 18px; margin-top: 16px; background: #ddd; border: 1px solid #bbb; font-size: 11px; overflow: hidden; }
.bg-canvas { flex: 1; background: #9ab2b2; position: relative; }
.axes { position: absolute; left: 40px; top: 773px; }
.axis-t { font: 9px "Liberation Mono", monospace; fill: #555; text-anchor: middle; font-weight: 700; }
.bg-right { width: 43px; flex: none; background: #f0f0f0; border-left: 1px solid #fff; display: flex; flex-direction: column; align-items: center; }
.r-grip { width: 34px; height: 2px; margin-top: 5px; background: repeating-linear-gradient(90deg, #aaa 0 2px, transparent 2px 4px); }
.r-i { width: 32px; height: 32px; margin-bottom: 6px; }
.r-first { margin-top: 7px; }
.r-sep { width: 33px; height: 1px; background: #ccc; margin: 0 0 5px; }
.bg-foot { height: 23px; flex: none; background: #f0f0f0; border-top: 1px solid #fff; }

/* notepad */
.notepad { position: absolute; left: 397px; top: 1005px; width: 900px; height: 60px; background: linear-gradient(#b9cadc, #dce8f4 30px); border: 1px solid #444; border-radius: 5px 5px 0 0; padding: 0 8px; }
.np-title { height: 29px; display: flex; align-items: center; position: relative; font-size: 13px; color: #111; padding-top: 4px; }
.np-ic { width: 12px; height: 15px; margin-left: 2px; background: repeating-linear-gradient(#dfeff6 0 2px, #8fb4c8 2px 3px); border: 1px solid #8a8a7a; }
.np-text { margin-left: 7px; font-family: "Open Sans", "Noto Sans CJK SC", sans-serif; font-size: 12.5px; white-space: pre; }
.np-ctrl { position: absolute; right: 0; top: 7px; display: flex; gap: 3px; }
.np-ctrl .wbtn { height: 19px; }
.np-body { background: #fff; height: 30px; }

/* camQuix main window */
.camq { position: absolute; left: 9px; top: 17px; width: 1481px; height: 834px; border: 1px solid #444; border-radius: 5px 5px 0 0; background: #dce6f2; display: flex; flex-direction: column; padding: 0 8px 7px 6px; }
.cq-title { height: 29px; flex: none; margin: 0 -8px 0 -6px; padding-left: 29px; display: flex; align-items: center; position: relative; background: linear-gradient(#b8c9dc, #dce8f4); color: #333; }
.cq-logo { position: absolute; left: 9px; top: 10px; width: 14px; height: 16px; }
.cq-text { white-space: pre; font-size: 12.7px; font-family: "Open Sans", "Noto Sans CJK SC", sans-serif; margin-top: 7px; }
.cq-ctrl { position: absolute; right: 9px; top: 10px; display: flex; gap: 3px; }
.cq-client { flex: 1; background: #f0f0f0; display: flex; flex-direction: column; min-height: 0; }
.menu { height: 21px; flex: none; display: flex; padding: 0 0 2px 6px; align-items: center; gap: 11px; border-bottom: 1px solid #b8b8b8; font-family: "Noto Sans CJK SC", sans-serif; font-size: 11px; letter-spacing: 3px; }
.menu span { display: block; margin-right: -1px; }
.tools { height: 33px; flex: none; display: flex; align-items: center; padding-bottom: 3px; }
.ti { width: 21px; height: 24px; }
.grip { display: block; width: 5px; height: 28px; flex: none; background: repeating-linear-gradient(#bbb 0 2px, transparent 2px 4px); }
.sep { display: block; width: 1px; height: 24px; background: #aaa; flex: none; }
.db-t { font-size: 12px; font-weight: 700; fill: #0aa020; }
.pg-t { font-size: 9px; font-weight: 700; fill: #e01010; }
.slider { position: relative; width: 87px; height: 28px; margin-left: 3px; flex: none; }
.sl-track { position: absolute; left: 0; right: 0; top: 9px; height: 3px; border: 1px solid #bbb; background: #e8e8e8; }
.sl-ticks { position: absolute; left: 0; bottom: 2px; width: 86px; height: 6px; }
.sl-thumb { position: absolute; left: 38px; top: 2px; width: 10px; height: 17px; background: #eee; border: 1px solid #888; border-radius: 2px 2px 5px 5px; }
.combo-top { width: 146px; height: 18px; margin-left: 11px; flex: none; display: flex; align-items: center; justify-content: space-between; padding-left: 4px; background: #fff; border: 1px solid #aaa; font-size: 12px; }
.combo-btn { width: 15px; height: 16px; border-left: 1px solid #999; background: #e8e8e8; position: relative; }
.combo-btn::after { content: ""; position: absolute; left: 3px; top: 7px; border: 4px solid transparent; border-top: 4px solid #111; border-bottom: 0; }

.work { flex: 1; display: flex; min-height: 0; }
.left { width: 281px; flex: none; padding-left: 4px; display: flex; flex-direction: column; }
.search { display: flex; align-items: flex-start; margin-top: 2px; height: 19px; }
.search-in { width: 211px; height: 18px; background: #fff; border: 1px solid #aaa; }
.search-n { margin-left: 8px; width: 31px; padding-top: 2px; }
.search-btn { width: 20px; height: 19px; border: 1px solid #888; border-radius: 2px; background: #e8e8e8; padding: 1px 0 0 2px; }
.tabs { display: flex; align-items: flex-end; height: 24px; margin-top: 2px; }
.tab { width: 73px; height: 21px; padding: 1px 0 0 7px; background: linear-gradient(#f0f0f0, #dcdcdc); border: 1px solid #aaa; border-bottom: 0; font-family: "Noto Sans CJK SC", sans-serif; font-size: 11px; letter-spacing: 3px; }
.tab-on { width: 62px; height: 25px; margin-bottom: -1px; background: #fff; position: relative; z-index: 1; padding: 3px 0 0 6px; }
.tabpanel { width: 270px; height: 529px; background: #fff; border: 1px solid #999; border-bottom: 0; padding: 11px 0 0 11px; }
.treebox { width: 247px; height: 504px; border: 1px solid #a0a0a8; display: grid; grid-template-columns: 229px 16px; grid-template-rows: 486px 16px; background: #f4f4f4; }
.tree { background: #ffffc8; overflow: hidden; font-size: 11px; min-width: 0; }
.row span, .leaf span { white-space: pre; }
.tree-head { height: 20px; background: linear-gradient(#fff, #f2f2f2); display: flex; border-bottom: 1px solid #e4e4e4; font-family: "Noto Sans CJK SC", sans-serif; font-size: 11px; letter-spacing: 3px; align-items: stretch; line-height: 19px; }
.th1 { width: 208px; padding-left: 5px; border-right: 1px solid #ccc; }
.th2 { padding-left: 4px; }
.row { display: flex; align-items: center; padding-left: 3px; }
.r28 { height: 28px; } .r27 { height: 27px; }
.ic-order { width: 24px; height: 24px; margin-right: 1px; }
.lv1 { padding-left: 3px; }
.lv2 { padding-left: 18px; }
.minus { display: block; width: 9px; height: 9px; border: 1px solid #8898a8; background: linear-gradient(#fff, #d8e0e8); position: relative; flex: none; }
.minus::after { content: ""; position: absolute; left: 1px; right: 1px; top: 3px; height: 1px; background: #345; }
.ic-sheet { width: 24px; height: 24px; margin: 0 2px 0 6px; }
.ic-part { width: 24px; height: 26px; margin: 0 2px 0 5px; }
.leaf { height: 20px; margin-left: 37px; padding-left: 11px; border-left: 1px dotted #777; display: flex; align-items: center; position: relative; }
.leaf::before { content: ""; position: absolute; left: 0; top: 10px; width: 8px; border-top: 1px dotted #777; }
.ic-cyl { width: 12px; height: 15px; margin-right: 3px; }
.ic-mill { width: 15px; margin-left: -3px; margin-right: 3px; }
.vscroll { position: relative; background: #f4f4f4; border-left: 1px solid #ddd; }
.arr-up { position: absolute; left: 3px; top: 5px; border: 4px solid transparent; border-top: 0; border-bottom: 4px solid #444; }
.arr-down { position: absolute; left: 3px; bottom: 5px; border: 4px solid transparent; border-bottom: 0; border-top: 4px solid #444; }
.vthumb { position: absolute; left: 0; top: 20px; width: 14px; height: 115px; background: linear-gradient(90deg, #e8e8e8, #c8c8c8); border: 1px solid #a0a0a0; border-radius: 2px; }
.hscroll { position: relative; background: #f4f4f4; grid-column: 1; }
.arr-left { position: absolute; left: 6px; top: 4px; border: 4px solid transparent; border-left: 0; border-right: 4px solid #444; }
.arr-right { position: absolute; right: 6px; top: 4px; border: 4px solid transparent; border-right: 0; border-left: 4px solid #444; }
.hthumb { position: absolute; left: 18px; top: 0; width: 139px; height: 15px; background: linear-gradient(#eee, #c8c8c8); border: 1px solid #a0a0a0; border-radius: 2px; }
.corner { background: #f4f4f4; }
.status { display: flex; margin-top: 12px; height: 18px; align-items: center; }
.cjk { font-family: "Noto Sans CJK SC", sans-serif; font-size: 11px; letter-spacing: 3px; }
.status .cjk { width: 105px; margin-top: -2px; }
.status-in { width: 167px; height: 18px; background: #c0ffc0; border: 1px solid #aaa; padding-left: 3px; }
.mini { width: 273px; height: 109px; margin: 5px 0 0 -1px; background: #548487; }

.right { flex: 1; display: flex; flex-direction: column; min-width: 0; position: relative; }
.top { height: 529px; flex: none; display: flex; }
.view { width: 908px; flex: none; background: #548487; position: relative; overflow: hidden; }
.view-cap { position: absolute; left: 179px; top: 5px; color: #c6d4d4; font-size: 11px; white-space: pre; letter-spacing: -.16px; }
.beam { position: absolute; left: 0; top: 0; }
.side { margin-left: 16px; padding-top: 11px; width: 247px; }
.props { width: 247px; height: 448px; border: 1px solid #808890; display: flex; flex-direction: column; background: #fff; }
.pr { height: 20px; flex: none; display: flex; }
.tall { height: 34px; }
.pl { width: 137px; flex: none; display: flex; align-items: center; padding: 2px 0 0 5px; background: linear-gradient(#fff 0, #f8f8f8 30%, #f0f0f0); border-bottom: 2px solid #d0d0d0; color: #808080; font-size: 11px; letter-spacing: -.3px; white-space: pre; }
.pv { flex: 1; display: flex; align-items: center; border-bottom: 1px solid #c0c0c0; padding-left: 1px; min-width: 0; background: #fff; }
.phead .pl { background: #f0f0f0; border-bottom: 0; }
.phead .pv { background: linear-gradient(#f4f4f4, #fafafa); color: #777; padding-left: 5px; }
.cjkg { font-family: "Noto Sans CJK SC", sans-serif; font-size: 11px; letter-spacing: 3px; }
.chk { display: block; width: 13px; height: 13px; border: 1px solid #8c8c8c; background: linear-gradient(135deg, #e8e8e8, #fff); box-shadow: inset 0 0 0 1px #f4f4f4; }
.fld { width: 91px; height: 19px; border: 1px solid #b0c4e0; background: #fff; display: flex; align-items: center; padding-left: 1px; color: #000; }
.fld-r { justify-content: flex-end; padding-right: 1px; }
.fld-c { font-family: "Noto Sans CJK SC", sans-serif; font-size: 11px; letter-spacing: 3px; }
.fld-btn { width: 15px; height: 19px; margin-left: 1px; background: #f4f4f4; border: 1px solid #ccc; position: relative; }
.fld-btn::after { content: ""; position: absolute; left: 3px; top: 7px; border: 4px solid transparent; border-top: 4px solid #aaa; border-bottom: 0; }
.pfill { flex: 1; display: flex; }
.pfl { width: 137px; background: #f0f0f0; }
.pfr { flex: 1; background: #fff; }
.dbtn { width: 244px; height: 20px; margin: 9px 0 0 1px; background: #f4f4f4; border: 1px solid #aaa; border-radius: 2px; text-align: center; color: #888; font-family: "Noto Sans CJK SC", sans-serif; font-size: 11px; letter-spacing: 3px; line-height: 18px; }
.dbtn.first { margin-top: 8px; }
.bottom { flex: 1; display: flex; min-height: 0; }
.group { width: 1073px; height: 161px; margin: 13px 0 0 2px; border: 1px solid #d8e4ec; border-radius: 3px; position: relative; flex: none; padding: 11px 0 0 0; }
.legend { position: absolute; left: 6px; top: -7px; background: #f0f0f0; padding: 0 1px; font-family: "Noto Sans CJK SC", sans-serif; font-size: 11px; letter-spacing: 3px; line-height: 14px; height: 14px; }
.form { display: grid; grid-template-columns: 106px 426px 7px 65px 466px; grid-auto-rows: 18px; row-gap: 5px; align-items: center; }
.form label { grid-column: 1; }
.form label:nth-of-type(even) { grid-column: 4; }
.form .in:nth-of-type(even) { grid-column: 5; }
.in { height: 18px; background: #fff; border: 1px solid #b0b0b0; padding-left: 2px; line-height: 16px; font-size: 11px; letter-spacing: -.2px; }
.actions { width: 101px; margin: 104px 0 0 3px; flex: none; display: flex; flex-direction: column; gap: 9px; }
.abtn { height: 37px; border: 1px solid #666; border-radius: 2px; background: linear-gradient(#f2f2f2 0, #ececec 48%, #d2d2d2 49%, #d0d0d0); display: flex; align-items: center; justify-content: center; }
.abtn-on { border: 1px solid #2aa0e0; box-shadow: inset 0 0 0 1px #9fdcf8; padding-top: 3px; }
.svg-one { font: 700 22px "Liberation Serif", serif; text-anchor: middle; fill: #111; }
.sizegrip { position: absolute; right: 7px; bottom: 3px; }

/* about dialog */
.about { position: absolute; left: 552px; top: 285px; width: 385px; height: 288px; border: 1px solid #444; border-radius: 5px 5px 0 0; background: #dce6f2; padding: 0 1px 1px; display: flex; flex-direction: column; }
.ab-title { height: 25px; flex: none; margin: 0 -1px; display: flex; align-items: center; padding-left: 24px; position: relative; background: linear-gradient(#bfcfe0, #dce8f4); color: #555; font-size: 12px; font-family: "Noto Sans CJK SC", sans-serif; }
.ab-logo { position: absolute; left: 5px; top: 5px; width: 14px; height: 15px; }
.ab-close { position: absolute; right: 5px; top: 4px; }
.ab-body { flex: 1; background: #f0f0f0; padding-top: 12px; position: relative; }
.ab-head { text-align: center; font-weight: 700; font-size: 12.5px; line-height: 14px; }
.ab-text { margin: 37px 0 0 11px; font-size: 11px; letter-spacing: -.25px; line-height: 14px; }
.ab-text div { height: 14px; white-space: nowrap; }
.ws { font-family: "Noto Sans CJK SC", sans-serif; font-size: 11px; letter-spacing: 3px; line-height: 1; }
.blank { height: 14px; }
.ab-ok { position: absolute; left: 150px; top: 224px; width: 80px; height: 23px; border: 1px solid #2a8ccc; border-radius: 3px; box-shadow: inset 0 0 0 1px #a8e0f8; background: linear-gradient(#f4f4f4 0, #ececec 48%, #d4d4d4 50%, #cfcfcf); text-align: center; line-height: 21px; }

.cursor { position: absolute; left: 551px; top: 1002px; }

/* taskbar */
.taskbar { height: 40px; flex: none; position: relative; display: flex; align-items: center; background: linear-gradient(90deg, #7f93a8 0, #a8c0dc 65px, #a8c0dc 1480px, #8296ac 1510px, #8296ac 100%); border-top: 1px solid #444e58; }
.orb { margin-left: 8px; }
.ie { margin-left: 26px; }
.tb-btn { width: 59px; height: 39px; border: 1px solid #5c6c80; border-bottom: 0; border-radius: 3px 3px 0 0; background: linear-gradient(#c5d6e8, #a8c0dc); display: flex; align-items: center; justify-content: center; }
.b-ex { margin-left: 13px; background: linear-gradient(#e2eaf4, #bcd0e4); }
.rec { margin-left: 16px; }
.b-np { margin-left: 17px; background: linear-gradient(#e2eaf4, #bcd0e4); }
.b-q { margin-left: 3px; }
.b-c { margin-left: 3px; }
.tray { position: absolute; left: 1526px; top: 0; right: 0; bottom: 0; display: flex; align-items: center; }
.ch { font: 12px "Liberation Mono", monospace; color: #fff; width: 21px; }
.tr-help { margin-left: 5px; }
.tr-mon { margin-left: 10px; }
.tr-2 { margin-left: 10px; }
.tr-3 { margin-left: 7px; }
.tr-4 { margin-left: 8px; }
.tr-5 { margin-left: 36px; }
.tr-6 { margin-left: 6px; }
.tr-7 { margin-left: 8px; }
.tr-8 { margin-left: 9px; }
.svg-help { font: 700 11px "Liberation Sans", sans-serif; fill: #fff; text-anchor: middle; }
.svg-vm { font: 700 8px "Liberation Sans", sans-serif; fill: #fff; text-anchor: middle; }
.clock { margin-left: 40px; width: 60px; color: #f0f0f0; font-size: 12px; line-height: 18px; text-align: center; font-family: "Noto Sans", sans-serif; letter-spacing: .2px; }
.showdesk { position: absolute; right: 0; top: 0; width: 15px; height: 39px; border: 1px solid #556; background: linear-gradient(90deg, #6a7c8e, #9aa8b8); }
```
